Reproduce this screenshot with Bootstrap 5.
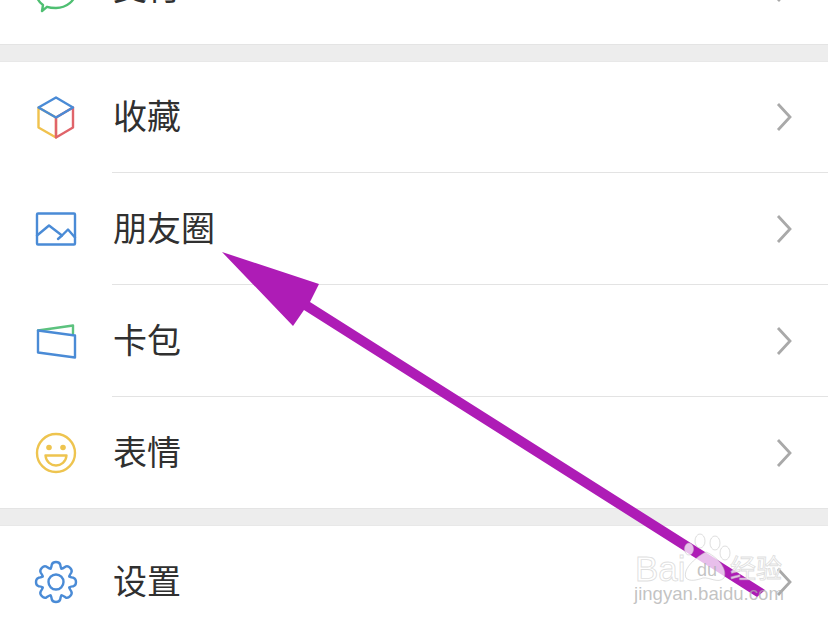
<!DOCTYPE html>
<html lang="zh">
<head>
<meta charset="utf-8">
<link href="https://cdn.jsdelivr.net/npm/bootstrap@5.3.0/dist/css/bootstrap.min.css" rel="stylesheet">
<style>
html,body{margin:0;background:#fff;overflow:hidden}
.stage{position:relative;width:828px;height:621px;overflow:hidden;background:#fff;font-family:"Noto Sans CJK SC","Liberation Sans",sans-serif}
.menu-row{height:112px}
.menu-row.is-first{height:111px}
.menu-row.is-last{height:111px}
.menu-row.is-clipped{margin-top:-68px}
.icon-cell{width:112px;flex:none}
.icon-cell svg{width:56px;height:56px;display:block;fill:none;stroke-width:2.4;stroke-linejoin:round;stroke-linecap:round}
.row-body{height:100%;padding-right:36px}
.row-body.has-rule{border-bottom:1px solid #e3e3e3}
.row-label{font-size:34px;color:#303030;line-height:1;margin-left:1px;padding-bottom:4px}
.chev{width:16px;height:28px;fill:none;stroke:#a9a9a9;stroke-width:2.8}
.band{height:18px;background:#ededed;border-top:1px solid #e4e4e4;border-bottom:1px solid #e8e8e8}
.overlay{position:absolute;left:0;top:0;width:828px;height:621px;pointer-events:none}
.wm{fill:rgba(255,255,255,.72);stroke:rgba(190,190,190,.5);stroke-width:.9;font-family:"Liberation Sans",sans-serif}
.wm-cjk{font-family:"Noto Sans CJK SC",sans-serif}
.wm-small{fill:rgba(175,175,175,.75);stroke:none}
.wm-paw{fill:rgba(255,255,255,.72);stroke:rgba(190,190,190,.5)}
</style>
</head>
<body>
<div class="stage">
  <div class="d-flex align-items-stretch menu-row is-clipped">
    <div class="icon-cell d-flex align-items-center justify-content-center">
      <svg viewBox="0 0 56 56"><path d="M14 51 L15 45 C9 41 8 34 8 30 C8 19 17 12 28 12 C39 12 48 20 48 30 C48 41 38 48 28 48 C24 48 21 47.500 19 46.800 Z" stroke="#4fbf72"/></svg>
    </div>
    <div class="row-body flex-grow-1 d-flex align-items-center justify-content-between">
      <span class="row-label">支付</span>
      <svg class="chev" viewBox="0 0 16 28"><path d="M2 1 L14 14 L2 27"/></svg>
    </div>
  </div>
  <div class="band"></div>

  <div class="d-flex menu-row is-first">
    <div class="icon-cell d-flex align-items-center justify-content-center">
      <svg viewBox="0 0 56 56">
        <path d="M28 47.500 L28 27.500 L10.500 17.500 L10.500 37.500 Z" stroke="#f0c24e"/>
        <path d="M28 47.500 L28 27.500 L45 17.500 L45 37.500 Z" stroke="#e0646a"/>
        <path d="M28 7.500 L45 17.500 L28 27.500 L10.500 17.500 Z" stroke="#4a8bd6"/>
      </svg>
    </div>
    <div class="row-body has-rule flex-grow-1 d-flex align-items-center justify-content-between">
      <span class="row-label">收藏</span>
      <svg class="chev" viewBox="0 0 16 28"><path d="M2 1 L14 14 L2 27"/></svg>
    </div>
  </div>

  <div class="d-flex menu-row">
    <div class="icon-cell d-flex align-items-center justify-content-center">
      <svg viewBox="0 0 56 56" stroke="#4a8bd6">
        <rect x="9" y="12.500" width="38" height="31" rx="1"/>
        <path d="M9 34.500 L21 24.500 L34 34.500 L40 28.500 L47 36.500"/>
        <path d="M30 38 L34 34.500"/>
      </svg>
    </div>
    <div class="row-body has-rule flex-grow-1 d-flex align-items-center justify-content-between">
      <span class="row-label">朋友圈</span>
      <svg class="chev" viewBox="0 0 16 28"><path d="M2 1 L14 14 L2 27"/></svg>
    </div>
  </div>

  <div class="d-flex menu-row">
    <div class="icon-cell d-flex align-items-center justify-content-center">
      <svg viewBox="0 0 56 56">
        <path d="M10 17.500 L45 12.500 L45 20.500" stroke="#5cc27e"/>
        <path d="M10 17.500 L47 22.500 L47 44.500 L10 39.500 Z" stroke="#4a8bd6"/>
      </svg>
    </div>
    <div class="row-body has-rule flex-grow-1 d-flex align-items-center justify-content-between">
      <span class="row-label">卡包</span>
      <svg class="chev" viewBox="0 0 16 28"><path d="M2 1 L14 14 L2 27"/></svg>
    </div>
  </div>

  <div class="d-flex menu-row is-last">
    <div class="icon-cell d-flex align-items-center justify-content-center">
      <svg viewBox="0 0 56 56" stroke="#eec44f">
        <circle cx="28" cy="28" r="19"/>
        <circle cx="21" cy="22.500" r="2.800" fill="#eec44f" stroke="none"/>
        <circle cx="35" cy="22.500" r="2.800" fill="#eec44f" stroke="none"/>
        <path d="M17.500 30.500 H38.500 C38 37 33 40.500 28 40.500 C23 40.500 18 37 17.500 30.500 Z"/>
      </svg>
    </div>
    <div class="row-body flex-grow-1 d-flex align-items-center justify-content-between">
      <span class="row-label">表情</span>
      <svg class="chev" viewBox="0 0 16 28"><path d="M2 1 L14 14 L2 27"/></svg>
    </div>
  </div>
  <div class="band"></div>

  <div class="d-flex menu-row is-last">
    <div class="icon-cell d-flex align-items-center justify-content-center">
      <svg viewBox="-28 -28 56 56" stroke="#4a8bd6">
        <defs><path id="tooth" d="M-5.550-13.400 C-4.500-14.500-4.500-16-4.200-17.500 Q-3.300-20 0-20 Q3.300-20 4.200-17.500 C4.500-16 4.500-14.500 5.550-13.400"/></defs>
        <use href="#tooth"/>
        <use href="#tooth" transform="rotate(45)"/>
        <use href="#tooth" transform="rotate(90)"/>
        <use href="#tooth" transform="rotate(135)"/>
        <use href="#tooth" transform="rotate(180)"/>
        <use href="#tooth" transform="rotate(225)"/>
        <use href="#tooth" transform="rotate(270)"/>
        <use href="#tooth" transform="rotate(315)"/>
        <circle r="7.500"/>
      </svg>
    </div>
    <div class="row-body flex-grow-1 d-flex align-items-center justify-content-between">
      <span class="row-label">设置</span>
      <svg class="chev" viewBox="0 0 16 28"><path d="M2 1 L14 14 L2 27"/></svg>
    </div>
  </div>

  <svg class="overlay" viewBox="0 0 828 621">
    <polygon fill="#ae1cb6" points="222,252 319,284 310,302 765,590 757,597 304,310 293,326"/>
    <g class="wm-paw">
      <ellipse cx="700" cy="541" rx="5" ry="7"/>
      <ellipse cx="715" cy="543" rx="5" ry="7"/>
      <ellipse cx="725" cy="553" rx="5" ry="7"/>
      <ellipse cx="689" cy="549" rx="4.500" ry="6"/>
      <path d="M706 552 C716 556 728 568 724 578 C718 584 710 577 703 578 C697 580 690 582 686 578 C682 568 698 556 706 552 Z"/>
    </g>
    <text class="wm" x="635" y="581" font-size="35">Bai</text>
    <text class="wm wm-small" x="697" y="576" font-size="18">du</text>
    <text class="wm wm-cjk" x="730" y="578" font-size="26">经验</text>
    <text class="wm wm-small" x="634" y="600" font-size="18.600">jingyan.baidu.com</text>
  </svg>
</div>
</body>
</html>
